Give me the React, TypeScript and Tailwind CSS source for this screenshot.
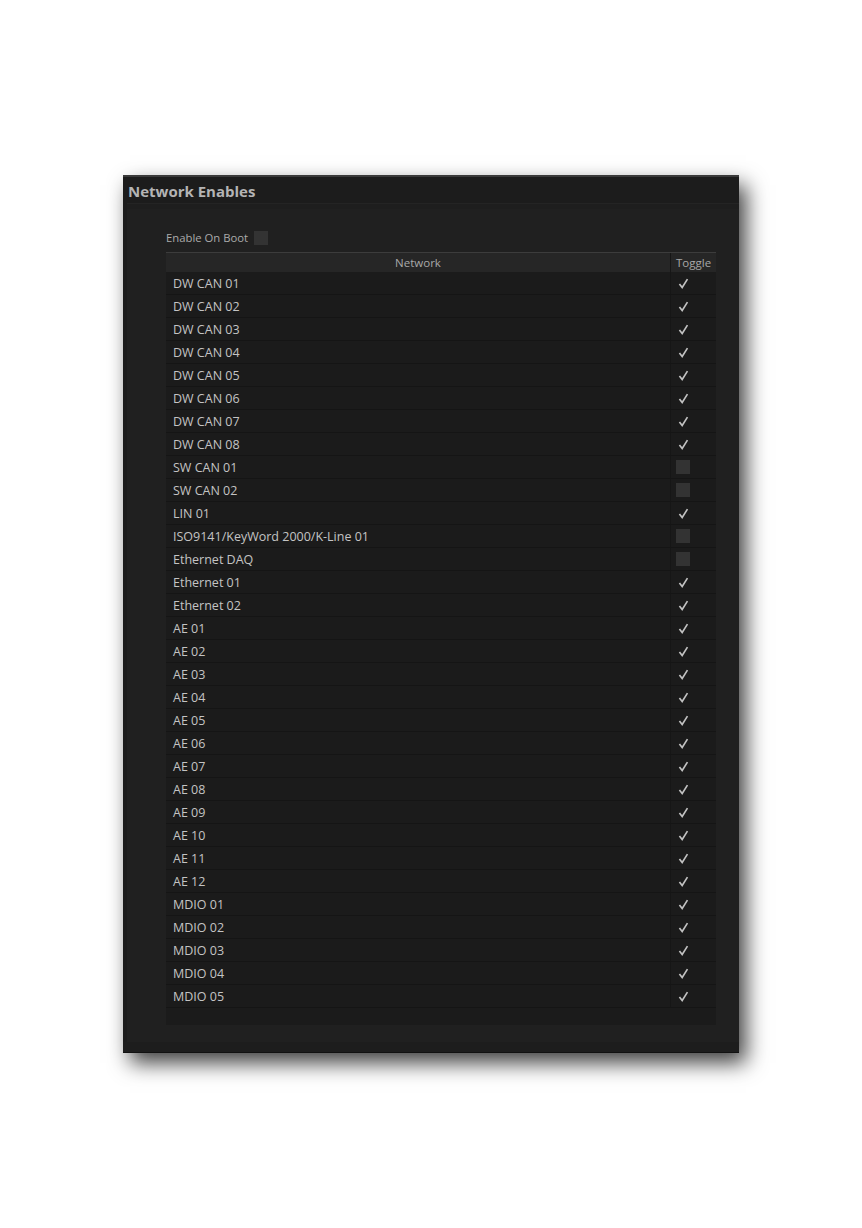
import React from "react";

const rows: [string, boolean][] = [
  ["DW CAN 01", true],
  ["DW CAN 02", true],
  ["DW CAN 03", true],
  ["DW CAN 04", true],
  ["DW CAN 05", true],
  ["DW CAN 06", true],
  ["DW CAN 07", true],
  ["DW CAN 08", true],
  ["SW CAN 01", false],
  ["SW CAN 02", false],
  ["LIN 01", true],
  ["ISO9141/KeyWord 2000/K-Line 01", false],
  ["Ethernet DAQ", false],
  ["Ethernet 01", true],
  ["Ethernet 02", true],
  ["AE 01", true],
  ["AE 02", true],
  ["AE 03", true],
  ["AE 04", true],
  ["AE 05", true],
  ["AE 06", true],
  ["AE 07", true],
  ["AE 08", true],
  ["AE 09", true],
  ["AE 10", true],
  ["AE 11", true],
  ["AE 12", true],
  ["MDIO 01", true],
  ["MDIO 02", true],
  ["MDIO 03", true],
  ["MDIO 04", true],
  ["MDIO 05", true],
];

export default function App() {
  return (
    <div
      className="min-h-screen bg-white pt-[175px] pl-[123px]"
      style={{ fontFamily: '"Open Sans", "Noto Sans", sans-serif' }}
    >
      <div className="w-[616px] h-[878px] bg-[#1c1c1c] border-t-2 border-[#3a3a3a] shadow-[7px_10px_20px_rgba(0,0,0,0.75)] flex flex-col">
        <div className="h-[26px] pl-[5px] pt-[2px] flex items-center text-[15px] font-bold text-[#b4b4b4] leading-none">
          Network Enables
        </div>
        <div className="h-[6px] bg-[#1e1e1e] border-t border-[#242424] ml-[4px]" />
        <div className="flex-1 ml-[4px] bg-[#202020] pt-[22px] pl-[39px] pr-[23px] pb-[16px] flex flex-col">
          <div className="h-[14px] flex items-center gap-[6px] text-[11.3px] text-[#ababab]">
            <span className="pt-[1px]">Enable On Boot</span>
            <span className="w-[14px] h-[14px] bg-[#333333]" />
          </div>
          <div className="mt-[7px] h-[773px] bg-[#1b1b1b] flex flex-col">
            <div className="h-[20px] flex bg-[#262626] border-t border-[#3c3c3c] text-[11.5px] text-[#a8a8a8]">
              <div className="w-[505px] flex items-center justify-center border-r border-[#161616] pt-[1px]">
                Network
              </div>
              <div className="flex-1 flex items-center pl-[5px] pt-[1px]">Toggle</div>
            </div>
            {rows.map(([name, on]) => (
              <div
                key={name}
                className="h-[23px] flex border-b border-[#151515] text-[12.5px] text-[#c4c4c4]"
              >
                <div className="w-[505px] flex items-center pl-[7px] pt-[2px] border-r border-[#161616]">
                  {name}
                </div>
                <div className="flex-1 flex items-center pl-[5px]">
                  {on ? (
                    <span className="w-[14px] h-[14px] flex items-center justify-center">
                      <svg width="11" height="11" viewBox="0 0 10 10">
                        <path
                          d="M1.3 5.4 L3.8 8.6 L8.6 1"
                          fill="none"
                          stroke="#c2c2c2"
                          strokeWidth="1.5"
                        />
                      </svg>
                    </span>
                  ) : (
                    <span className="w-[14px] h-[14px] bg-[#333333]" />
                  )}
                </div>
              </div>
            ))}
          </div>
        </div>
        <div className="h-[11px] bg-[#1d1d1d] border-b border-[#111111]" />
      </div>
    </div>
  );
}
